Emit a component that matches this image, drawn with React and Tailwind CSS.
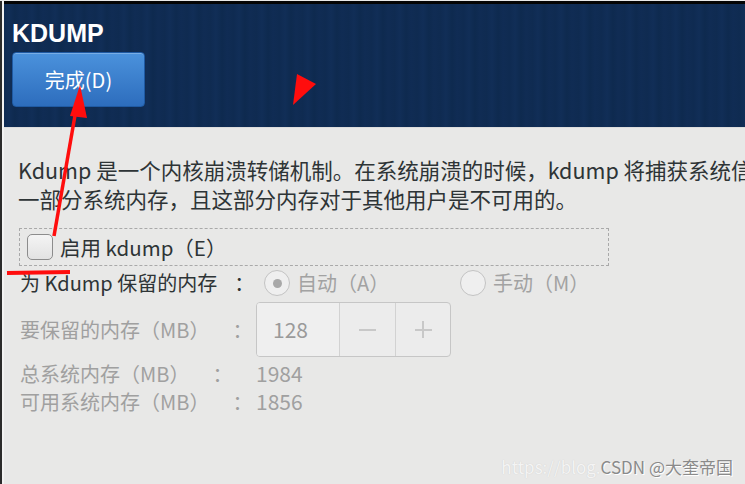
export default function App() {
  const font = { fontFamily: '"Noto Sans CJK SC", "Noto Sans", sans-serif' };

  return (
    <div
      className="relative w-[745px] h-[484px] overflow-hidden bg-[#e8e8e7] pt-px"
      style={font}
    >
      <div className="flex h-full border-l-2 border-[#2b2b2b]">
        <div className="flex-1 flex flex-col border-l-2 border-[#f2f2f2]">
          {/* Header */}
          <div className="h-[127px] border-t-[3px] border-[#050505] border-b border-b-[#dcdcdc] bg-[#0f2b52] bg-[repeating-linear-gradient(90deg,#0f2b52_0px,#112e57_5px,#0e2a4f_11px,#102c54_16px,#0f2b51_23px)] pl-2 pt-[15px]">
            <div className="text-white font-bold text-[25px] leading-[28px] font-['Liberation_Sans',sans-serif]">
              KDUMP
            </div>
            <button className="mt-[5px] w-[133px] h-[55px] rounded-[4px] bg-gradient-to-b from-[#4b92dc] to-[#2d6dbd] border border-[#1f5aa3] text-white text-[20px] shadow-[inset_0_1px_0_rgba(255,255,255,0.25)]">
              完成(D)
            </button>
          </div>

          {/* Body */}
          <div className="flex-1 pt-[27px] pl-[14px] text-[#2e3436]">
            <div className="text-[21.5px] leading-[29px] whitespace-nowrap">
              Kdump 是一个内核崩溃转储机制。在系统崩溃的时候，kdump 将捕获系统信
            </div>
            <div className="text-[21.5px] leading-[29px] whitespace-nowrap">
              一部分系统内存，且这部分内存对于其他用户是不可用的。
            </div>

            <div className="mt-[15px] ml-[1px] w-[590px] h-[38px] border border-dashed border-[#a9a9a9] flex items-center pl-[7px] gap-[7px]">
              <span className="w-[26px] h-[26px] rounded-[5px] border border-[#8c8c8c] bg-gradient-to-b from-[#f4f4f4] to-[#e2e2e2]" />
              <span className="text-[20.5px] leading-none">启用 kdump（E）</span>
            </div>

            <div className="mt-[3px] h-[28px] flex items-center pl-[2px] text-[20px]">
              <span className="w-[244px]">
                为 Kdump 保留的内存<span className="ml-[17px]">：</span>
              </span>
              <span className="flex items-center gap-[7px] text-[#a2a2a2] w-[196px]">
                <span className="w-[26px] h-[26px] rounded-full border border-[#c3c3c3] bg-[#efefef] flex items-center justify-center">
                  <span className="w-[9px] h-[9px] rounded-full bg-[#a8a8a8]" />
                </span>
                自动（A）
              </span>
              <span className="flex items-center gap-[7px] text-[#a2a2a2]">
                <span className="w-[26px] h-[26px] rounded-full border border-[#c3c3c3] bg-[#efefef]" />
                手动（M）
              </span>
            </div>

            <div className="mt-[5px] flex items-center pl-[2px] text-[20px] text-[#a0a0a0]">
              <span className="w-[236px]">
                要保留的内存（MB）<span className="ml-[33px]">：</span>
              </span>
              <div className="flex h-[55px] w-[195px] rounded-[4px] border border-[#c6c6c6] bg-[#ececec] overflow-hidden">
                <span className="w-[82px] flex items-center pl-[16px] text-[21px] text-[#9a9a9a] bg-[#efefef]">128</span>
                <span className="w-[56px] border-l border-[#d2d2d2] flex items-center justify-center">
                  <span className="w-[17px] h-[2px] bg-[#c8c8c8]" />
                </span>
                <span className="flex-1 border-l border-[#d2d2d2] flex items-center justify-center">
                  <span className="relative w-[17px] h-[17px]">
                    <span className="absolute left-0 top-[7.5px] w-[17px] h-[2px] bg-[#c8c8c8]" />
                    <span className="absolute top-0 left-[7.5px] w-[2px] h-[17px] bg-[#c8c8c8]" />
                  </span>
                </span>
              </div>
            </div>

            <div className="mt-[3px] h-[28px] flex items-center pl-[2px] text-[20px] text-[#a0a0a0]">
              <span className="w-[236px]">
                总系统内存（MB）<span className="ml-[33px]">：</span>
              </span>
              <span className="text-[21px]">1984</span>
            </div>
            <div className="h-[28px] flex items-center pl-[2px] text-[20px] text-[#a0a0a0]">
              <span className="w-[236px]">
                可用系统内存（MB）<span className="ml-[33px]">：</span>
              </span>
              <span className="text-[21px]">1856</span>
            </div>
          </div>
        </div>
      </div>

      {/* watermark */}
      <div className="absolute right-[12px] bottom-[9px] text-[17px] leading-none whitespace-nowrap">
        <span className="text-[#f4f4f4] [text-shadow:0_0_1px_#c8c8c8]">https://blog.</span>
        <span className="text-[#8a8a8a] [text-shadow:1px_1px_0_#ffffff]">CSDN @大奎帝国</span>
      </div>

      {/* red annotations */}
      <svg className="absolute inset-0 pointer-events-none" width="745" height="484">
        <line x1="54" y1="236" x2="77" y2="104" stroke="#ff0d0d" strokeWidth="3.5" />
        <polygon points="80,85 70,116 87,118" fill="#ff0d0d" />
        <polygon points="297,74 316,84 293,105" fill="#ff0d0d" />
        <line x1="7" y1="273" x2="70" y2="272" stroke="#ff0d0d" strokeWidth="4" />
      </svg>
    </div>
  );
}
